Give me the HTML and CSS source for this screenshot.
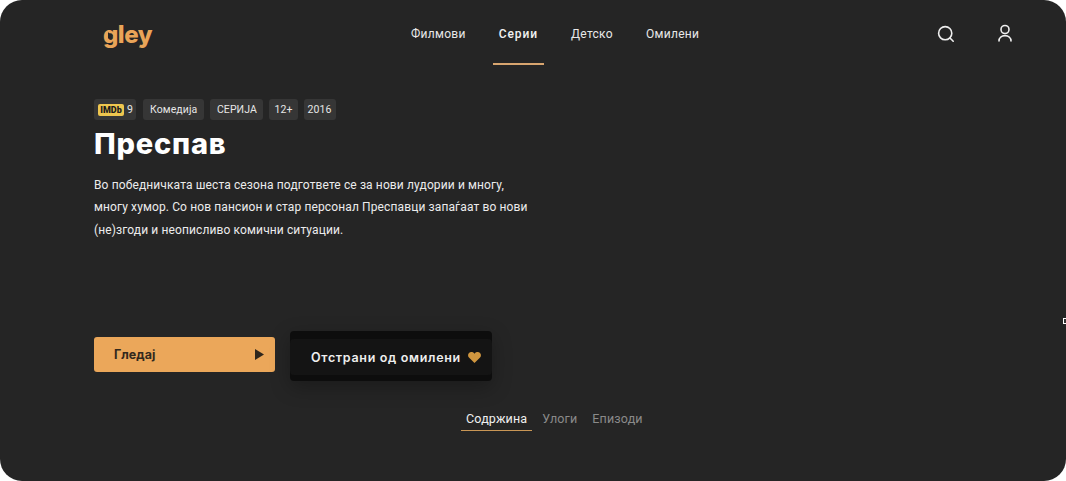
FILE: index.html
```html
<!DOCTYPE html>
<html lang="mk">
<head>
<meta charset="utf-8">
<title>Преспав</title>
<link rel="stylesheet" href="styles.css">
</head>
<body>
<div class="app">
  <header class="header">
    <div class="logo">gley<svg class="logo-play" viewBox="0 0 6 8"><path d="M0 0L6 4L0 8Z"/></svg></div>
    <nav class="nav">
      <a class="nav-item">Филмови</a>
      <a class="nav-item active">Серии</a>
      <a class="nav-item">Детско</a>
      <a class="nav-item">Омилени</a>
    </nav>
    <div class="header-icons">
      <svg class="icon" viewBox="0 0 20 20"><circle cx="9.2" cy="9.2" r="6.6"/><path d="M14 14L17.2 17.2"/></svg>
      <svg class="icon" viewBox="0 0 20 20"><circle cx="10" cy="5.500" r="4"/><path d="M4 17C4 13.600 6.600 11.600 10 11.600C13.400 11.600 16 13.600 16 17"/></svg>
    </div>
  </header>
  <main class="main">
    <div class="tags">
      <span class="tag tag-imdb"><b class="imdb">IMDb</b>9</span>
      <span class="tag tag-wide">Комедија</span>
      <span class="tag tag-mid">СЕРИЈА</span>
      <span class="tag">12+</span>
      <span class="tag tag-year">2016</span>
    </div>
    <h1 class="title">Преспав</h1>
    <p class="desc">Во победничката шеста сезона подгответе се за нови лудории и многу, многу хумор. Со нов пансион и стар персонал Преспавци запаѓаат во нови (не)згоди и неописливо комични ситуации.</p>
    <div class="actions">
      <button class="btn-watch">Гледај<svg class="play" viewBox="0 0 9 11"><path d="M0 0L9 5.5L0 11Z"/></svg></button>
      <div class="fav-wrap">
        <button class="btn-fav">Отстрани од омилени<svg class="heart" viewBox="0 0 14 12"><path d="M7 12L1.2 6.4C-.4 4.8-.4 2.4 1 1C2.500 -.3 5 -.3 7 1.800C9 -.3 11.500 -.3 13 1C14.400 2.400 14.400 4.800 12.800 6.400Z"/></svg></button>
      </div>
    </div>
    <div class="tabs">
      <a class="tab active">Содржина</a>
      <a class="tab">Улоги</a>
      <a class="tab">Епизоди</a>
    </div>
  </main>
  <span class="edge-mark"></span>
</div>
</body>
</html>
```

FILE: styles.css
```css
* { box-sizing: border-box; }
html, body { margin: 0; padding: 0; background: #fff; }
body { width: 1066px; height: 481px; overflow: hidden; font-family: Roboto, "Liberation Sans", sans-serif; }
.app { position: relative; width: 1066px; height: 481px; background: #252525; border-radius: 22px; overflow: hidden; color: #fff; }

.header { display: grid; grid-template-columns: 410px 1fr 125px; height: 65px; padding-left: 103px; }
.logo { position: relative; align-self: start; margin-top: 20px; width: 50px; font-family: Inter, "Open Sans", sans-serif; font-weight: 800; font-size: 24px; line-height: 30px; letter-spacing: -.5px; color: #e9a458; }
.logo-play { position: absolute; left: 4.500px; top: 11.500px; width: 5px; height: 7px; fill: #252525; }
.nav { display: flex; height: 65px; margin-left: -108px; }
.nav-item { display: flex; align-items: center; justify-content: center; height: 65px; padding: 4px 6px 0; margin-right: 21px; font-size: 12px; letter-spacing: .3px; color: #e8e8e8; border-bottom: 2px solid transparent; }
.nav-item.active { font-weight: 500; letter-spacing: .9px; color: #f2f2f2; border-bottom-color: #d8a56f; }
.header-icons { display: flex; gap: 39px; padding-top: 24px; margin-left: -5px; }
.icon { width: 20px; height: 20px; fill: none; stroke: #eee; stroke-width: 1.6; stroke-linecap: round; }

.main { padding: 34px 0 0 94px; }
.tags { display: flex; gap: 6px; height: 21px; }
.tag { display: flex; align-items: center; height: 21px; padding: 0 5px; border-radius: 3px; background: #363636; font-size: 10.500px; letter-spacing: .1px; color: #e6e6e6; }
.tag-wide { margin-left: 1px; padding: 0 7px; }
.tag-mid { padding: 0 6.500px; }
.tag-year { padding: 0 4px; }
.tag-imdb { padding: 0 3px 0 4px; gap: 3px; }
.imdb { display: block; width: 26px; height: 12px; border-radius: 2px; background: #eec64f; color: #1c1c1c; font-size: 9px; font-weight: 900; line-height: 12px; text-align: center; letter-spacing: 0; }
.title { margin: 6px 0 0; font-family: Inter, "Open Sans", sans-serif; font-weight: 800; font-size: 29px; line-height: 35px; letter-spacing: .8px; color: #fff; }
.desc { width: 445px; margin: 12.500px 0 0; font-size: 12px; line-height: 22.500px; letter-spacing: .12px; color: #ececec; }

.actions { display: flex; align-items: flex-start; gap: 15px; margin-top: 90px; }
.btn-watch { display: flex; align-items: center; justify-content: space-between; width: 181px; height: 35px; margin-top: 6px; padding: 0 11px 0 20px; border: 0; border-radius: 3px; background: #eba75a; color: #33291d; font-family: Inter, "Open Sans", sans-serif; font-weight: 700; font-size: 12.500px; }
.play { width: 9px; height: 11px; fill: #2e261c; }
.fav-wrap { width: 202px; height: 50px; padding-top: 8px; border-radius: 4px; background: #0d0d0d; box-shadow: 0 6px 20px rgba(0,0,0,.28); }
.btn-fav { display: flex; align-items: center; width: 100%; height: 36px; padding: 0 11px 0 21px; border: 0; border-radius: 4px; background: #141414; color: #eee; font-family: Inter, "Open Sans", sans-serif; font-weight: 600; font-size: 12.500px; letter-spacing: .68px; justify-content: space-between; white-space: nowrap; }
.heart { width: 13px; height: 11px; fill: #d0963f; }

.tabs { display: flex; gap: 5px; margin: 28.500px 0 0 367px; }
.tab { padding: 0 5px 2px; font-size: 12.500px; line-height: 18px; letter-spacing: .15px; color: #8a8a8a; border-bottom: 1.500px solid transparent; }
.tab.active { color: #f0f0f0; border-bottom-color: #c99655; }

.edge-mark { position: absolute; right: -1px; top: 318px; width: 4px; height: 6px; border: 1.500px solid #fff; background: #333; }
```
